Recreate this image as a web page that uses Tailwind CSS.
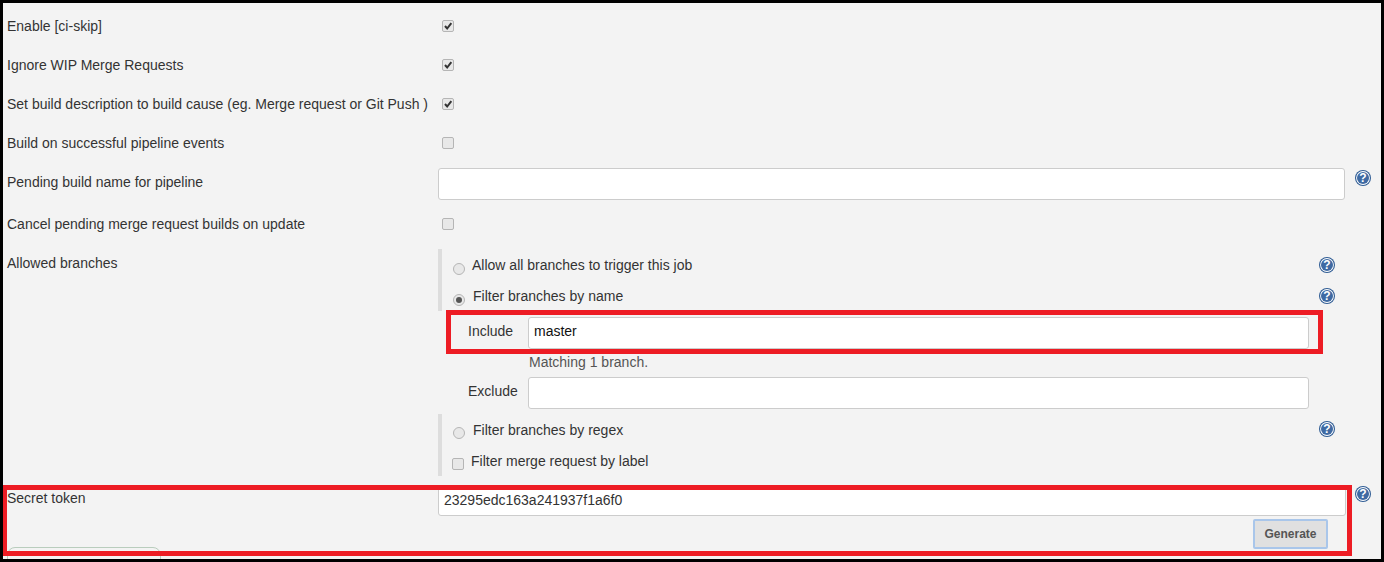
<!DOCTYPE html>
<html lang="en">
<head>
    <meta charset="UTF-8">
    <title>GitLab trigger settings</title>
    <script src="https://cdn.jsdelivr.net/npm/@tailwindcss/browser@4"></script>
</head>
<body class="bg-black">
    <svg class="hidden">
        <symbol id="help" viewBox="0 0 16 16">
            <circle cx="8" cy="8" r="8" fill="#2f5c94"/>
            <circle cx="8" cy="8" r="6.9" fill="#fff"/>
            <circle cx="8" cy="8" r="6" fill="#3f6aa3"/>
            <text x="8" y="12.3" text-anchor="middle" font-family="Liberation Sans" font-weight="700" font-size="12" fill="#fff">?</text>
        </symbol>
        <symbol id="tick" viewBox="0 0 12 12">
            <path d="M2.4 6 5 9 10 2.6" fill="none" stroke="#333" stroke-width="2.4"/>
        </symbol>
    </svg>

    <div class="relative w-[1384px] h-[562px] overflow-hidden border-t-[3px] border-l-[3px] border-r-[3px] border-b-[3px] border-black bg-[#f3f3f3] text-[14px] text-[#333] font-['Liberation_Sans',Arial,sans-serif]">
        <div class="pt-[4px]">
            <!-- Checkbox rows -->
            <div class="flex items-center h-[39px]">
                <div class="w-[435px] pl-[4px]">Enable [ci-skip]</div>
                <span class="ml-[4px] mb-[2px] w-[12px] h-[12px] rounded-[2px] border border-[#b5b5b5] bg-[#e8e8e8]"><svg class="w-[10px] h-[10px]"><use href="#tick"/></svg></span>
            </div>
            <div class="flex items-center h-[39px]">
                <div class="w-[435px] pl-[4px]">Ignore WIP Merge Requests</div>
                <span class="ml-[4px] mb-[2px] w-[12px] h-[12px] rounded-[2px] border border-[#b5b5b5] bg-[#e8e8e8]"><svg class="w-[10px] h-[10px]"><use href="#tick"/></svg></span>
            </div>
            <div class="flex items-center h-[39px]">
                <div class="w-[435px] pl-[4px]">Set build description to build cause (eg. Merge request or Git Push )</div>
                <span class="ml-[4px] mb-[2px] w-[12px] h-[12px] rounded-[2px] border border-[#b5b5b5] bg-[#e8e8e8]"><svg class="w-[10px] h-[10px]"><use href="#tick"/></svg></span>
            </div>
            <div class="flex items-center h-[39px]">
                <div class="w-[435px] pl-[4px]">Build on successful pipeline events</div>
                <span class="ml-[4px] mb-[2px] w-[12px] h-[12px] rounded-[2px] border border-[#b5b5b5] bg-[#e8e8e8]"></span>
            </div>

            <!-- Pending build name -->
            <div class="flex items-start h-[42px] pt-[5px]">
                <div class="w-[435px] pl-[4px] pt-[4px]">Pending build name for pipeline</div>
                <div class="w-[907px] h-[32px] rounded-[3px] border border-[#ccc] bg-white"></div>
                <svg class="ml-[10px] mt-[2px] w-[16px] h-[16px]"><use href="#help"/></svg>
            </div>

            <div class="flex items-center h-[39px]">
                <div class="w-[435px] pl-[4px]">Cancel pending merge request builds on update</div>
                <span class="ml-[4px] mb-[2px] w-[12px] h-[12px] rounded-[2px] border border-[#b5b5b5] bg-[#e8e8e8]"></span>
            </div>

            <!-- Allowed branches -->
            <div class="flex h-[239px]">
                <div class="w-[435px] pl-[4px] pt-[9px]">Allowed branches</div>
                <div class="w-[897px] pt-[5px]">
                    <div class="border-l-[4px] border-[#ddd] h-[62px] pt-[1px]">
                        <div class="flex items-center h-[31px]">
                            <span class="ml-[11px] mt-[6px] w-[12px] h-[12px] rounded-full border border-[#b5b5b5] bg-[#e8e8e8]"></span>
                            <span class="ml-[7px]">Allow all branches to trigger this job</span>
                            <svg class="ml-auto mb-[2px] w-[16px] h-[16px]"><use href="#help"/></svg>
                        </div>
                        <div class="flex items-center h-[31px]">
                            <span class="flex items-center justify-center ml-[11px] mt-[6px] w-[12px] h-[12px] rounded-full border border-[#b5b5b5] bg-[#e8e8e8]"><span class="w-[6px] h-[6px] rounded-full bg-[#555]"></span></span>
                            <span class="ml-[8px]">Filter branches by name</span>
                            <svg class="ml-auto mb-[2px] w-[16px] h-[16px]"><use href="#help"/></svg>
                        </div>
                    </div>
                    <div class="flex items-start h-[43px] pt-[6px]">
                        <div class="w-[90px] pl-[30px] pt-[4px]">Include</div>
                        <div class="flex items-center w-[781px] h-[32px] pl-[5px] pb-[3px] rounded-[3px] border border-[#ccc] bg-white text-[#111]">master</div>
                    </div>
                    <div class="h-[23px] pl-[91px] leading-[16px] text-[#555]">Matching 1 branch.</div>
                    <div class="flex items-start h-[37px]">
                        <div class="w-[90px] pl-[30px] pt-[4px]">Exclude</div>
                        <div class="w-[781px] h-[32px] rounded-[3px] border border-[#ccc] bg-white"></div>
                    </div>
                    <div class="border-l-[4px] border-[#ddd] h-[62px]">
                        <div class="flex items-center h-[31px]">
                            <span class="ml-[11px] mt-[6px] w-[12px] h-[12px] rounded-full border border-[#b5b5b5] bg-[#e8e8e8]"></span>
                            <span class="ml-[8px] mt-[2px]">Filter branches by regex</span>
                            <svg class="ml-auto mb-[2px] w-[16px] h-[16px]"><use href="#help"/></svg>
                        </div>
                        <div class="flex items-center h-[31px]">
                            <span class="ml-[10px] mt-[6px] w-[12px] h-[12px] rounded-[2px] border border-[#b5b5b5] bg-[#e8e8e8]"></span>
                            <span class="ml-[7px] mt-[2px]">Filter merge request by label</span>
                        </div>
                    </div>
                </div>
            </div>

            <!-- Secret token -->
            <div class="flex items-start">
                <div class="w-[435px] pl-[4px] pt-[5px]">Secret token</div>
                <div class="w-[908px] pt-[3px]">
                    <div class="flex items-center h-[30px] pl-[5px] pb-[2px] rounded-[3px] border border-[#ccc] bg-white">23295edc163a241937f1a6f0</div>
                    <div class="flex justify-end pr-[18px] pt-[3px]">
                        <button class="w-[75px] h-[30px] border-2 border-[#a9c6ea] rounded-[2px] bg-[#e0e0e0] text-[12px] font-bold text-[#555]">Generate</button>
                    </div>
                </div>
                <svg class="ml-[9px] mt-[3px] w-[16px] h-[16px]"><use href="#help"/></svg>
            </div>
        </div>

        <!-- Tab edge peeking out at the bottom -->
        <div class="absolute left-[4px] top-[544px] w-[154px] h-[20px] rounded-t-[8px] border border-[#b9cdbd]"></div>

        <!-- Red annotation boxes -->
        <div class="absolute left-[443px] top-[307px] w-[877px] h-[44px] border-[5px] border-[#ed1c24]"></div>
        <div class="absolute left-[-1px] top-[482px] w-[1350px] h-[71px] border-[5px] border-[#ed1c24]"></div>
    </div>
</body>
</html>
